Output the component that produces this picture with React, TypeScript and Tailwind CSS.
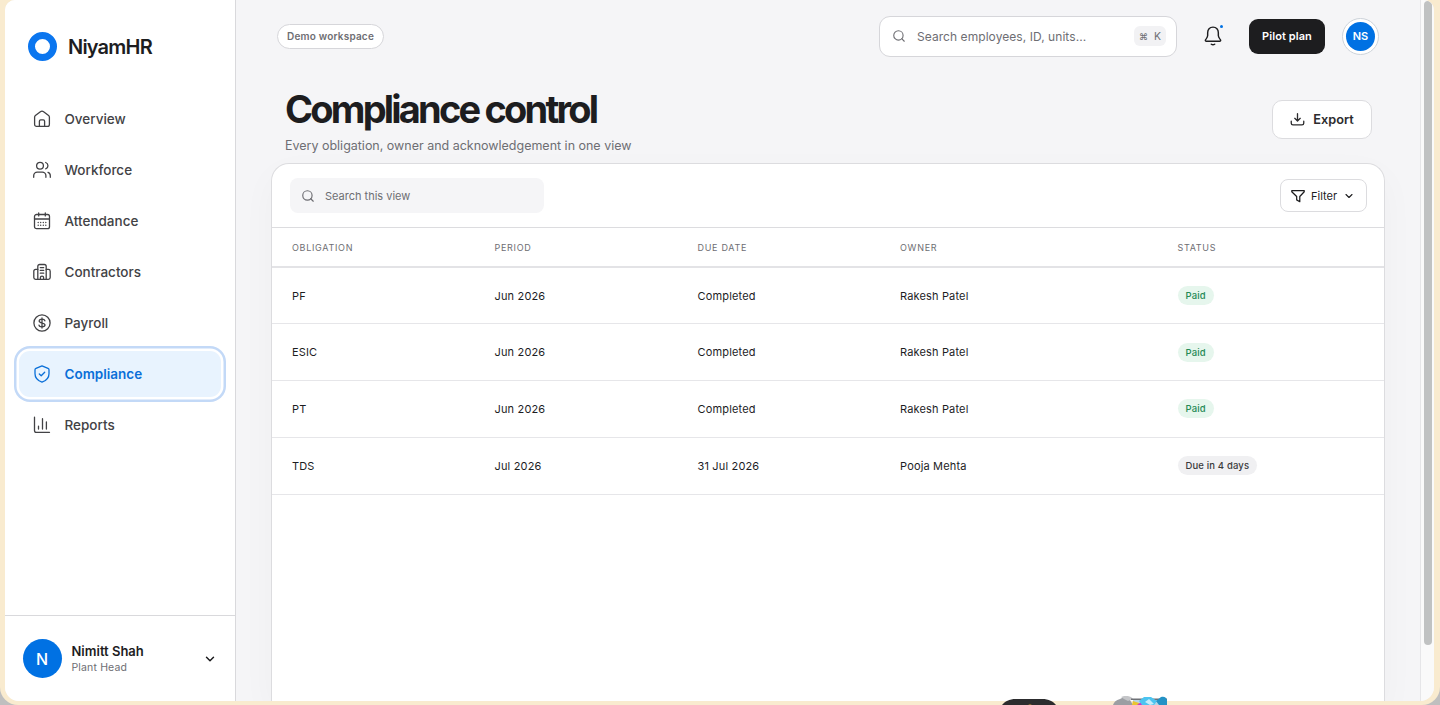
import React from 'react';
import { ChevronDown, Search } from 'lucide-react';
import clsx from 'clsx';

type IconProps = { className?: string };

function Glyph({ className = 'h-[18px] w-[18px]', children }: { className?: string; children: React.ReactNode }) {
  return (
    <svg
      viewBox="0 0 18 18"
      fill="none"
      stroke="currentColor"
      strokeWidth="1.3"
      strokeLinecap="round"
      strokeLinejoin="round"
      className={clsx('shrink-0', className)}
    >
      {children}
    </svg>
  );
}

const HomeIcon = ({ className }: IconProps) => (
  <Glyph className={className}>
    <path d="M1.6 7.2c0-.6.3-1.2.8-1.6l5-3.9c.9-.7 2.3-.7 3.2 0l5 3.9c.5.4.8 1 .8 1.6v7.3c0 1-.9 1.9-1.9 1.9h-11c-1 0-1.9-.9-1.9-1.9z" />
    <path d="M6.4 16.2v-5c0-.8.5-1.3 1.3-1.3h2.6c.8 0 1.3.5 1.3 1.3v5" />
  </Glyph>
);

const UsersIcon = ({ className }: IconProps) => (
  <Glyph className={className}>
    <circle cx="7" cy="4.7" r="3.4" />
    <path d="M.7 16.3v-1.5c0-2 1.6-3.6 3.6-3.6h5c2 0 3.6 1.6 3.6 3.6v1.5" />
    <path d="M12.7 1.5a3.4 3.4 0 0 1 0 6.4M15 11.3c1.4.5 2.3 1.8 2.3 3.4v1.6" />
  </Glyph>
);

const CalendarIcon = ({ className }: IconProps) => (
  <Glyph className={className}>
    <rect x="1.5" y="2.5" width="15" height="14.2" rx="2" />
    <path d="M1.5 7h15M5.7.9v3M12.3.9v3" />
    <path strokeWidth="1.4" d="M5.2 10.5h.01M7.7 10.5h.01M10.3 10.5h.01M12.8 10.5h.01M5.2 13.3h.01M7.7 13.3h.01M10.3 13.3h.01M12.8 13.3h.01" />
  </Glyph>
);

const BuildingIcon = ({ className }: IconProps) => (
  <Glyph className={className}>
    <path d="M4.8 16.3V3.4c0-1.1.8-1.9 1.9-1.9h4.6c1.1 0 1.9.8 1.9 1.9v12.9" />
    <path d="M4.8 6.4H2.6c-1.1 0-1.8.8-1.8 1.8v6.3c0 1 .8 1.8 1.8 1.8h12.8c1 0 1.8-.8 1.8-1.8V8.2c0-1-.7-1.8-1.8-1.8h-2.2" />
    <path d="M7.4 16.2v-1.7c0-.9.6-1.4 1.6-1.4s1.6.5 1.6 1.4v1.7M7.3 4.6h3.4M7.3 7.4h3.4M7.3 10.2h3.4" />
  </Glyph>
);

const DollarIcon = ({ className }: IconProps) => (
  <Glyph className={className}>
    <circle cx="9" cy="9" r="8.1" />
    <path d="M11.9 6.8c-.3-1-1.3-1.6-2.9-1.6-1.7 0-2.8.7-2.8 1.9 0 2.8 5.8 1.1 5.8 3.9 0 1.1-1.2 1.8-3 1.8-1.7 0-2.8-.7-3-1.7M9 3.9v10.2" />
  </Glyph>
);

const ShieldIcon = ({ className }: IconProps) => (
  <Glyph className={className}>
    <path d="M9 .9 15 3.3c.7.3 1 .8 1 1.5v4c0 4-2.7 6.9-7 8.4-4.3-1.5-7-4.4-7-8.4v-4c0-.7.3-1.2 1-1.5z" />
    <path d="m6.3 9 1.9 1.8 3.5-3.5" />
  </Glyph>
);

const ChartIcon = ({ className }: IconProps) => (
  <Glyph className={className}>
    <path d="M1.5 1.2v13.2c0 1.1.8 1.9 1.9 1.9h13.1" />
    <path d="M5.5 10.2v2.8M9.5 2.7V13M13.4 6v7" />
  </Glyph>
);

const DownloadIcon = ({ className }: IconProps) => (
  <Glyph className={className}>
    <path strokeWidth="1.6" d="M9 2v8.6M5.7 7.6 9 10.8l3.3-3.2M1.5 11v2.4c0 1.2.9 2.1 2.1 2.1h10.8c1.2 0 2.1-.9 2.1-2.1V11" />
  </Glyph>
);

const FunnelIcon = ({ className }: IconProps) => (
  <Glyph className={className}>
    <path strokeWidth="1.6" d="M1 2h16v1.5l-5.7 6.2v6.6L7.3 14V9.7L1 3.5z" />
  </Glyph>
);

const BellIcon = ({ className }: IconProps) => (
  <Glyph className={className}>
    <path d="M9 1C5.9 1 4.2 3.2 4.2 6v2.6c0 1.2-.7 2.2-1.5 3.2-.8.9-.9 1.9.2 1.9h12.2c1.1 0 1-1 .2-1.9-.8-1-1.5-2-1.5-3.2V6C13.8 3.2 12.1 1 9 1z" />
    <path d="M7.5 16.4c.8.6 2.2.6 3 0" />
  </Glyph>
);

const navItems = [
  { label: 'Overview', icon: HomeIcon },
  { label: 'Workforce', icon: UsersIcon },
  { label: 'Attendance', icon: CalendarIcon },
  { label: 'Contractors', icon: BuildingIcon },
  { label: 'Payroll', icon: DollarIcon },
  { label: 'Compliance', icon: ShieldIcon, active: true },
  { label: 'Reports', icon: ChartIcon },
];

const columns = ['Obligation', 'Period', 'Due date', 'Owner', 'Status'];

const rows = [
  { obligation: 'PF', period: 'Jun 2026', due: 'Completed', owner: 'Rakesh Patel', status: 'Paid' },
  { obligation: 'ESIC', period: 'Jun 2026', due: 'Completed', owner: 'Rakesh Patel', status: 'Paid' },
  { obligation: 'PT', period: 'Jun 2026', due: 'Completed', owner: 'Rakesh Patel', status: 'Paid' },
  { obligation: 'TDS', period: 'Jul 2026', due: '31 Jul 2026', owner: 'Pooja Mehta', status: 'Due in 4 days' },
];

const gridCols = 'grid grid-cols-[202.5px_203px_202.5px_277.5px_1fr] items-center pl-5';

function Sidebar() {
  return (
    <aside className="flex w-[231px] shrink-0 flex-col border-r border-[#d9d9dc] bg-white">
      <div className="flex items-center gap-[11px] pl-[23px] pt-[31.5px]">
        <span className="h-[29px] w-[29px] rounded-full border-[7px] border-[#0b76ef]" />
        <span className="pt-px text-[20px] font-semibold leading-7 tracking-[-0.8px] text-[#1d1d1f]">NiyamHR</span>
      </div>

      <nav className="mt-[35.5px] flex flex-col gap-[5px] px-3.5">
        {navItems.map(({ label, icon: Icon, active }) => (
          <a
            key={label}
            className={clsx(
              'flex h-[46px] items-center gap-[14px] rounded-[11px] pl-[13.5px] text-[13.5px]',
              active
                ? 'bg-[#e8f3fe] font-semibold text-[#0a6fd8] ring-[2.5px] ring-[#c3d9f7] ring-offset-[2.5px] ring-offset-white'
                : 'font-medium text-[#424245]'
            )}
          >
            <Icon />
            <span className="pt-px">{label}</span>
          </a>
        ))}
      </nav>

      {/* Account */}
      <div className="mt-auto flex h-[86px] items-center border-t border-[#d9d9dc] pl-[17.5px] pr-[18px]">
        <span className="flex h-[39px] w-[39px] items-center justify-center rounded-full bg-[#0071e3] text-[16px] font-medium text-white">
          N
        </span>
        <div className="ml-[10px]">
          <p className="text-[13px] font-semibold leading-[17px] text-[#1d1d1f]">Nimitt Shah</p>
          <p className="text-[10.5px] leading-[15px] tracking-[0.15px] text-[#6e6e73]">Plant Head</p>
        </div>
        <ChevronDown className="ml-auto h-3.5 w-3.5 text-[#1d1d1f]" strokeWidth={2.5} />
      </div>
    </aside>
  );
}

function TopBar() {
  return (
    <header className="flex h-[72px] items-center px-[41px]">
      <span className="flex h-[25px] items-center rounded-full border border-[#d6d6da] bg-white px-[9px] pt-px text-[10px] font-semibold tracking-[0.2px] text-[#6e6e73]">
        Demo workspace
      </span>

      <div className="ml-auto flex h-[41px] w-[298px] items-center rounded-[11px] border border-[#d6d6da] bg-white pl-[12px] pr-[10px] text-[#6e6e73]">
        <Search className="h-[14px] w-[14px]" strokeWidth={1.9} />
        <span className="ml-[11px] pt-0.5 text-[12px] tracking-[0.06px]">Search employees, ID, units...</span>
        <span className="ml-auto flex h-5 w-[32px] items-center justify-center gap-1.5 rounded-md bg-[#f2f2f4] pt-px text-[10.5px]">
          <span className="text-[9px]">⌘</span>
          <span>K</span>
        </span>
      </div>

      <button className="relative ml-[26px] text-[#1d1d1f]">
        <BellIcon className="h-5 w-5" />
        <span className="absolute -top-px right-0 h-[3px] w-[3px] rounded-full bg-[#0071e3]" />
      </button>

      <button className="ml-[26px] h-[35px] w-[76px] rounded-[9px] bg-[#1d1d1f] text-[11px] font-semibold tracking-[0.08px] text-white">
        Pilot plan
      </button>

      <span className="ml-[17px] flex h-[37px] w-[37px] items-center justify-center rounded-full border border-[#cdd3da] bg-white">
        <span className="flex h-[29px] w-[29px] items-center justify-center rounded-full bg-[#0071e3] text-[11px] font-semibold text-white">
          NS
        </span>
      </span>
    </header>
  );
}

function ComplianceTable() {
  return (
    <section className="mx-[35px] flex flex-1 flex-col rounded-t-[18px] border border-b-0 border-[#dcdcdf] bg-white shadow-[0_12px_36px_rgba(0,0,0,0.03)]">
      <div className="flex h-[64px] items-center justify-between border-b border-[#dcdcdf] pl-[18px] pr-[17px]">
        <div className="flex h-[35px] w-[254px] items-center gap-[10px] rounded-lg bg-[#f5f5f7] pl-[11px] text-[#6e6e73]">
          <Search className="h-[14px] w-[14px]" strokeWidth={2} />
          <span className="pt-px text-[11px]">Search this view</span>
        </div>
        <button className="flex h-[33px] w-[87px] items-center rounded-lg border border-[#dcdcdf] bg-white pl-[10px] text-[11px] text-[#1d1d1f]">
          <FunnelIcon className="h-[14px] w-[14px]" />
          <span className="ml-[6px] pt-px">Filter</span>
          <ChevronDown className="ml-[6px] h-[12px] w-[12px]" strokeWidth={2.2} />
        </button>
      </div>

      <div className={clsx(gridCols, 'h-[39.5px] border-b-2 border-[#e3e3e6] pt-0.5 text-[9px] uppercase tracking-[0.7px] text-[#6e6e73]')}>
        {columns.map((column) => (
          <span key={column}>{column}</span>
        ))}
      </div>

      {rows.map((row) => (
        <div key={row.obligation} className={clsx(gridCols, 'h-[56.8px] border-b border-[#e6e6e9] text-[11px] tracking-[0.16px] text-[#1d1d1f]')}>
          <span className="pt-px">{row.obligation}</span>
          <span className="pt-px">{row.period}</span>
          <span className="pt-px">{row.due}</span>
          <span className="pt-px">{row.owner}</span>
          <span className="flex">
            <span
              className={clsx(
                'flex h-[19px] items-center rounded-full px-2 pt-px text-[9.5px] font-medium tracking-[0.15px]',
                row.status === 'Paid' ? 'bg-[#e6f6ed] text-[#248a55]' : 'bg-[#f0f0f2] text-[#3a3a3c]'
              )}
            >
              {row.status}
            </span>
          </span>
        </div>
      ))}
    </section>
  );
}

/* Tops of the dock icons that peek over the window's lower edge */
function DockPeek() {
  return (
    <svg viewBox="0 0 180 10" className="absolute bottom-0 left-[995px] h-[10px] w-[180px]">
      <path d="M7 10c3-3.5 7-6 14-6h26c7 0 11 2.5 14 6z" fill="#2c2c2e" />
      <path d="M33 10l2-1.3 2 1.3z" fill="#8a6a34" />
      <path d="M118 10c1-3 3-5 7-6l4-2 6 3 3 5z" fill="#9c9ea3" />
      <path d="M126 2c2-1.5 8-1.5 10 0l2 2-5 2-4-2z" fill="#c4c5c8" />
      <path d="M136 3.5h36v1.5h-36z" fill="#6e7176" />
      <path d="M138 5h32v5h-32z" fill="#b7d6e4" />
      <path d="M137 10l1-4 6 2v2z" fill="#eac52f" />
      <path d="M142 10l4-3 3 3z" fill="#c93cc8" />
      <path d="M144 6l5-4h7l6 4-3 4h-12z" fill="#4cc4f0" />
      <path d="M150 7l4-3 5 5-4 1z" fill="#c5edfb" />
      <path d="M161 6l5-4c3-1 5 0 6 3v5h-8z" fill="#2392c6" />
    </svg>
  );
}

export default function App() {
  return (
    <div className="relative h-[705px] w-[1440px] overflow-hidden bg-[#bfbfbf] font-['Inter',sans-serif]">
      <div className="h-[705px] rounded-b-[18px] bg-[#f9ebcf] pb-1 pl-[5px] pr-1.5">
        <div className="flex h-[701px] overflow-hidden rounded-b-[14px] rounded-t-[10px] bg-[#f5f5f7]">
          <Sidebar />

          <main className="flex min-w-0 flex-1 flex-col">
            <TopBar />
            <div className="flex h-[91px] justify-between pl-[49px] pr-[48px]">
              <div>
                <h1 className="mt-[13px] text-[38px] font-bold leading-[48px] tracking-[-2.8px] text-[#1d1d1f]">Compliance control</h1>
                <p className="mt-1 text-[12.5px] leading-[18px] tracking-[-0.01px] text-[#6e6e73]">
                  Every obligation, owner and acknowledgement in one view
                </p>
              </div>
              <button className="mt-7 flex h-[39px] w-[100px] items-center justify-center gap-2 rounded-[10px] border border-[#dcdcdf] bg-white text-[12.75px] font-semibold text-[#2c2c2e]">
                <DownloadIcon className="h-[15px] w-[15px]" />
                <span className="pt-px">Export</span>
              </button>
            </div>
            <ComplianceTable />
          </main>

          {/* Scrollbar */}
          <div className="flex w-[14px] shrink-0 justify-center border-l border-[#e6e6e8] bg-[#fafafa] pt-px">
            <div className="h-[644px] w-2 rounded-full bg-[#c0c2c2]" />
          </div>
        </div>
      </div>
      <DockPeek />
    </div>
  );
}
